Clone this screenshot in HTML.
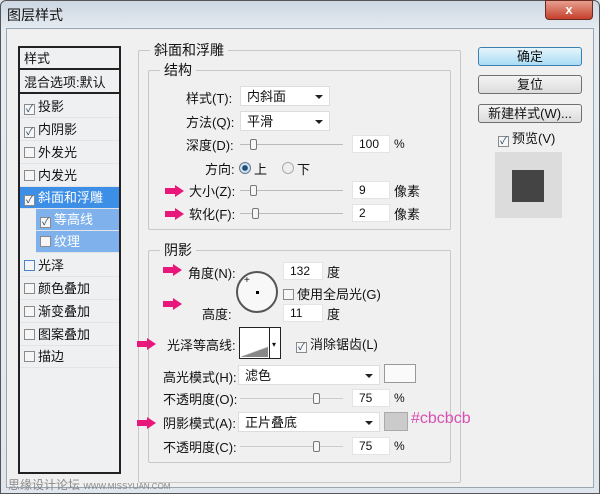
<!DOCTYPE html><html><head><meta charset="utf-8"><style>
*{margin:0;padding:0;box-sizing:border-box}
body{width:600px;height:494px;overflow:hidden;background:#dfe6ee;font-family:"Liberation Sans","Noto Sans CJK SC",sans-serif;font-size:13px;color:#111;position:relative}
.a{position:absolute;white-space:nowrap}
.frame{position:absolute;left:0;top:0;width:600px;height:494px;background:linear-gradient(#cdd7e2,#e6ecf2 30px,#dfe6ee);border:1px solid #555;border-radius:6px 6px 0 0}
.body{position:absolute;left:6px;top:28px;width:588px;height:460px;background:#f0f0f0;border:1px solid #9aa6b2}
.lp{position:absolute;left:18px;top:46px;width:103px;height:428px;border:2px solid #222;background:#eef0f2}
.it{position:absolute;left:0;width:99px;height:22px;line-height:22px;padding-left:4px;border-bottom:1px solid #e2e4e6}
.cb{display:inline-block;width:11px;height:11px;border:1px solid #8a8a8a;background:#f6f6f6;vertical-align:-1px;margin-right:3px;font-size:10px;line-height:9px;text-align:center;color:#246}
.grp{position:absolute;border:1px solid #c8c8c8;border-radius:2px}
.lbl{position:absolute;background:#f0f0f0;padding:0 4px}
.dd{position:absolute;background:#fff;border:1px solid #ddd;height:20px;line-height:19px;padding-left:6px}
.dd:after{content:"";position:absolute;right:6px;top:8px;border:4px solid transparent;border-top:4px solid #222;border-bottom:0}
.in{position:absolute;background:#fff;border:1px solid #e4e4e4;height:18px;line-height:17px;padding-left:6px;font-size:12px}
.sl{position:absolute;height:1px;background:#bbb}
.th{position:absolute;width:7px;height:11px;border:1px solid #777;border-radius:2px;background:#f6f6f6;top:-5px}
.btn{position:absolute;left:478px;width:104px;height:19px;border:1px solid #707070;border-radius:3px;background:linear-gradient(#f4f4f4,#dcdcdc);text-align:center;line-height:17px}
.ar{position:absolute;width:20px;height:12px}
.ar:before{content:"";position:absolute;left:0;top:3px;width:11px;height:6px;background:#e8177a}
.ar:after{content:"";position:absolute;left:10px;top:0;border-left:9px solid #e8177a;border-top:6px solid transparent;border-bottom:6px solid transparent}
</style></head><body>
<div class="frame"></div>
<div class="a" style="left:7px;top:5px;font-size:14px">图层样式</div>
<div class="a" style="left:545px;top:0;width:48px;height:20px;background:linear-gradient(#e8a090,#c5402c);border:1px solid #6b2a20;border-radius:0 0 4px 4px;color:#fff;text-align:center;font-weight:bold;line-height:18px">x</div>
<div class="body"></div>
<div class="lp">
<div class="it" style="top:0;border-bottom:2px solid #222">样式</div>
<div class="it" style="top:24px;border-bottom:2px solid #222">混合选项:默认</div>
<div class="it" style="top:48px"><span class="cb">✓</span>投影</div>
<div class="it" style="top:71px"><span class="cb">✓</span>内阴影</div>
<div class="it" style="top:94px"><span class="cb"></span>外发光</div>
<div class="it" style="top:117px"><span class="cb"></span>内发光</div>
<div class="it" style="top:139px;background:#3d8ee6;color:#fff"><span class="cb">✓</span>斜面和浮雕</div>
<div class="it" style="top:161px;left:16px;width:83px;background:#7fb2ec;color:#fff"><span class="cb">✓</span>等高线</div>
<div class="it" style="top:183px;left:16px;width:83px;background:#7fb2ec;color:#fff"><span class="cb"></span>纹理</div>
<div class="it" style="top:207px"><span class="cb" style="border-color:#4a86c8"></span>光泽</div>
<div class="it" style="top:230px"><span class="cb"></span>颜色叠加</div>
<div class="it" style="top:253px"><span class="cb"></span>渐变叠加</div>
<div class="it" style="top:276px"><span class="cb"></span>图案叠加</div>
<div class="it" style="top:298px"><span class="cb"></span>描边</div>
</div>
<div class="grp" style="left:138px;top:50px;width:323px;height:433px"></div>
<div class="lbl" style="left:150px;top:40px;font-size:14px">斜面和浮雕</div>
<div class="grp" style="left:148px;top:70px;width:303px;height:160px"></div>
<div class="lbl" style="left:160px;top:60px;font-size:14px">结构</div>
<div class="a" style="left:186px;top:88px">样式(T):</div><div class="dd" style="left:240px;top:86px;width:90px">内斜面</div>
<div class="a" style="left:186px;top:112px">方法(Q):</div><div class="dd" style="left:240px;top:111px;width:90px">平滑</div>
<div class="a" style="left:186px;top:135px">深度(D):</div><div class="sl" style="left:240px;top:144px;width:103px"><div class="th" style="left:10px"></div></div><div class="in" style="left:352px;top:135px;width:38px">100</div><div class="a" style="left:394px;top:137px;font-size:12px">%</div>
<div class="a" style="left:205px;top:159px">方向:</div>
<div class="a" style="left:239px;top:162px;width:12px;height:12px;border-radius:50%;border:1px solid #678;background:radial-gradient(#1d4f7a 35%,#cfe3f3 45%)"></div><div class="a" style="left:254px;top:159px">上</div>
<div class="a" style="left:282px;top:162px;width:12px;height:12px;border-radius:50%;border:1px solid #aaa;background:#eee"></div><div class="a" style="left:297px;top:159px">下</div>
<div class="ar" style="left:165px;top:185px"></div><div class="a" style="left:189px;top:181px">大小(Z):</div><div class="sl" style="left:240px;top:190px;width:103px"><div class="th" style="left:10px"></div></div><div class="in" style="left:352px;top:181px;width:38px">9</div><div class="a" style="left:394px;top:181px">像素</div>
<div class="ar" style="left:165px;top:208px"></div><div class="a" style="left:189px;top:204px">软化(F):</div><div class="sl" style="left:240px;top:213px;width:103px"><div class="th" style="left:12px"></div></div><div class="in" style="left:352px;top:204px;width:38px">2</div><div class="a" style="left:394px;top:204px">像素</div>
<div class="grp" style="left:148px;top:250px;width:303px;height:213px"></div>
<div class="lbl" style="left:160px;top:240px;font-size:14px">阴影</div>
<div class="ar" style="left:163px;top:264px"></div><div class="a" style="left:188px;top:263px">角度(N):</div>
<div class="a" style="left:236px;top:271px;width:42px;height:42px;border-radius:50%;border:2px solid #555;background:#f8f8f8"></div><div class="a" style="left:256px;top:291px;width:3px;height:3px;background:#000"></div><div class="a" style="left:244px;top:275px;font-size:10px">+</div>
<div class="in" style="left:283px;top:262px;width:40px">132</div><div class="a" style="left:327px;top:262px">度</div>
<div class="a" style="left:283px;top:284px"><span class="cb"></span>使用全局光(G)</div>
<div class="ar" style="left:163px;top:298px"></div><div class="a" style="left:202px;top:304px">高度:</div>
<div class="in" style="left:283px;top:304px;width:40px">11</div><div class="a" style="left:327px;top:304px">度</div>
<div class="ar" style="left:137px;top:338px"></div><div class="a" style="left:167px;top:335px">光泽等高线:</div>
<div class="a" style="left:239px;top:327px;width:42px;height:32px;border:1px solid #222;background:#fff"><div style="position:absolute;left:1px;bottom:1px;width:27px;height:14px;background:linear-gradient(160deg,#fff 55%,#888 60%)"></div><div style="position:absolute;left:29px;top:0;width:1px;height:30px;background:#222"></div><div style="position:absolute;left:32px;top:12px;font-size:8px">▾</div></div>
<div class="a" style="left:296px;top:334px"><span class="cb">✓</span>消除锯齿(L)</div>
<div class="a" style="left:163px;top:367px">高光模式(H):</div><div class="dd" style="left:238px;top:365px;width:142px">滤色</div>
<div class="a" style="left:384px;top:364px;width:32px;height:19px;border:1px solid #999;background:#fafafa"></div>
<div class="a" style="left:163px;top:389px">不透明度(O):</div><div class="sl" style="left:240px;top:398px;width:103px;background:#ccc"><div class="th" style="left:73px"></div></div><div class="in" style="left:352px;top:389px;width:38px">75</div><div class="a" style="left:394px;top:391px;font-size:12px">%</div>
<div class="ar" style="left:137px;top:417px"></div><div class="a" style="left:163px;top:413px">阴影模式(A):</div><div class="dd" style="left:238px;top:412px;width:142px">正片叠底</div>
<div class="a" style="left:384px;top:412px;width:24px;height:19px;border:1px solid #aaa;background:#cbcbcb"></div>
<div class="a" style="left:411px;top:410px;color:#d94fb0;font-size:16px">#cbcbcb</div>
<div class="a" style="left:163px;top:437px">不透明度(C):</div><div class="sl" style="left:240px;top:446px;width:103px;background:#ccc"><div class="th" style="left:73px"></div></div><div class="in" style="left:352px;top:437px;width:38px">75</div><div class="a" style="left:394px;top:439px;font-size:12px">%</div>
<div class="btn" style="top:47px;border-color:#3c7fb1;background:linear-gradient(#e6f5fc,#a9dcf4)">确定</div>
<div class="btn" style="top:75px">复位</div>
<div class="btn" style="top:104px">新建样式(W)...</div>
<div class="a" style="left:498px;top:128px"><span class="cb">✓</span>预览(V)</div>
<div class="a" style="left:495px;top:152px;width:67px;height:66px;background:#dcdcdc"></div>
<div class="a" style="left:512px;top:170px;width:32px;height:32px;background:#444"></div>
<div class="a" style="left:8px;top:476px;color:#888;font-size:12px">思缘设计论坛 <span style="font-size:8px">WWW.MISSYUAN.COM</span></div>
</body></html>
